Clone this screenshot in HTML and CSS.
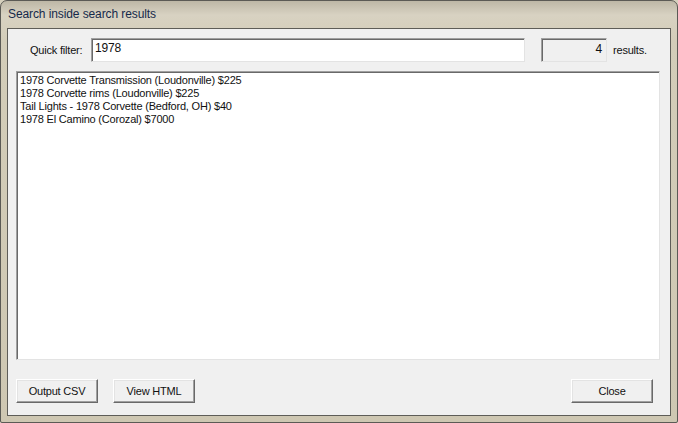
FILE: index.html
```html
<!DOCTYPE html>
<html>
<head>
<meta charset="utf-8">
<link rel="stylesheet" href="styles.css">
</head>
<body>
<div class="window">
  <div class="titlebar">Search inside search results</div>
  <div class="client">
    <div class="filter-row">
      <label class="label">Quick filter:</label>
      <div class="input">1978</div>
      <div class="count">4</div>
      <span class="results">results.</span>
    </div>
    <div class="list">
      <div class="item">1978 Corvette Transmission (Loudonville) $225</div>
      <div class="item">1978 Corvette rims (Loudonville) $225</div>
      <div class="item">Tail Lights - 1978 Corvette (Bedford, OH) $40</div>
      <div class="item">1978 El Camino (Corozal) $7000</div>
    </div>
    <div class="buttons">
      <button class="btn">Output CSV</button>
      <button class="btn">View HTML</button>
      <span class="spacer"></span>
      <button class="btn">Close</button>
    </div>
  </div>
</div>
</body>
</html>
```
FILE: styles.css
```css
* { box-sizing: border-box; }
html, body { margin: 0; padding: 0; }
body {
  width: 678px;
  height: 423px;
  overflow: hidden;
  background: #d6d0bd;
  font-family: "Liberation Sans", Arial, sans-serif;
}
.window {
  width: 678px;
  height: 423px;
  border: 1px solid #5b5a55;
  border-radius: 7px 7px 2px 2px;
  background: linear-gradient(180deg, #bdb7a6 0px, #d8d2c2 14px, #d3cdb9 40px, #cec7b2 100%);
  padding: 0 6px 6px 6px;
  display: flex;
  flex-direction: column;
}
.titlebar {
  height: 27px;
  padding: 6px 0 0 1px;
  font-size: 12px;
  letter-spacing: -0.1px;
  color: #15294a;
  line-height: 15px;
}
.client {
  flex: 1;
  background: #f0f0f0;
  border: 1px solid #5e5d58;
  padding: 9px 10px 12px 8px;
  display: flex;
  flex-direction: column;
  font-size: 11px;
  letter-spacing: -0.2px;
  color: #111;
}
.filter-row {
  height: 24px;
  display: flex;
  align-items: center;
  padding-left: 14px;
}
.label { width: 61px; flex-shrink: 0; }
.input {
  width: 434px;
  height: 24px;
  flex-shrink: 0;
  background: #fff;
  border-top: 1px solid #a0a0a0;
  border-left: 1px solid #a0a0a0;
  border-right: 1px solid #e3e3e3;
  border-bottom: 1px solid #e3e3e3;
  box-shadow: inset 1px 1px 0 #696969;
  padding: 2px 0 0 3px;
  font-size: 12px;
  line-height: 14px;
}
.count {
  width: 66px;
  height: 24px;
  flex-shrink: 0;
  margin-left: 16px;
  background: #f0f0f0;
  border-top: 1px solid #a0a0a0;
  border-left: 1px solid #a0a0a0;
  border-right: 1px solid #e3e3e3;
  border-bottom: 1px solid #e3e3e3;
  box-shadow: inset 1px 1px 0 #696969;
  text-align: right;
  padding: 3px 4px 0 0;
  font-size: 12px;
  line-height: 14px;
}
.results { margin-left: 6px; }
.list {
  margin-top: 9px;
  height: 289px;
  background: #fff;
  border-top: 1px solid #a0a0a0;
  border-left: 1px solid #a0a0a0;
  border-right: 1px solid #e3e3e3;
  border-bottom: 1px solid #e3e3e3;
  box-shadow: inset 1px 1px 0 #696969;
  padding: 2px 0 0 3px;
  font-size: 11px;
  line-height: 13px;
}
.item { white-space: nowrap; }
.buttons {
  margin-top: 19px;
  height: 24px;
  display: flex;
  gap: 15px;
  padding-right: 7px;
}
.spacer { flex: 1; }
.btn {
  width: 82px;
  height: 24px;
  margin: 0;
  padding: 0;
  background: #f0f0f0;
  font-family: "Liberation Sans", Arial, sans-serif;
  font-size: 11px;
  letter-spacing: -0.2px;
  color: #111;
  border-top: 1px solid #ffffff;
  border-left: 1px solid #ffffff;
  border-right: 1px solid #696969;
  border-bottom: 1px solid #696969;
  box-shadow: inset -1px -1px 0 #a0a0a0, inset 1px 1px 0 #e3e3e3;
}
```
